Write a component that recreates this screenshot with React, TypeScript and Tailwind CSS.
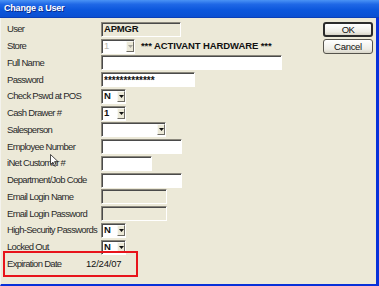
import React from "react";

const font = { fontFamily: '"Liberation Sans", Arial, sans-serif' };

function TextBox({ w, value, disabled, bold, stars }: { w: number; value?: string; disabled?: boolean; bold?: boolean; stars?: boolean }) {
  return (
    <div
      className={`h-[15px] flex items-center pl-[2px] border border-[#8a877c] border-b-white border-r-white shadow-[inset_1px_1px_0_#4a4a4a] overflow-hidden whitespace-nowrap ${disabled ? "bg-[#ECE9D8]" : "bg-white"}`}
      style={{ width: w }}
    >
      {value && (
        <span className={`${bold ? "font-bold tracking-[-0.2px]" : ""} ${stars ? "text-[10px] font-bold leading-none pt-[3px] tracking-normal" : ""} text-[#111]`}>{value}</span>
      )}
    </div>
  );
}

function Combo({ w, value, disabled }: { w: number; value?: string; disabled?: boolean }) {
  return (
    <div
      className="h-[15px] flex items-stretch border border-[#8a877c] border-b-white border-r-white shadow-[inset_1px_1px_0_#4a4a4a] bg-white"
      style={{ width: w }}
    >
      <div className={`flex-1 flex items-center pl-[2px] ${disabled ? "text-[#b8b6ad] font-normal" : "text-[#111] font-bold tracking-normal"}`}>{value}</div>
      <div className="w-[8px] my-[1px] bg-[#ECE9D8] border border-[#f8f8f4] border-b-[#6f6d66] border-r-[#6f6d66] flex items-center justify-center">
        <svg width="5" height="3" viewBox="0 0 5 3">
          <path d="M0 0H5L2.5 3Z" fill={disabled ? "#a8a69e" : "#111"} />
        </svg>
      </div>
    </div>
  );
}

function Row({ label, children }: { label: string; children?: React.ReactNode }) {
  return (
    <div className="h-[16.75px] flex items-center">
      <div className="w-[94px] shrink-0 text-[#2a2a2a] whitespace-nowrap">{label}</div>
      {children}
    </div>
  );
}

export default function App() {
  return (
    <div className="w-[379px] h-[286px] overflow-hidden flex flex-col bg-[#ECE9D8] text-[9.5px] tracking-[-0.7px]" style={font}>
      <div className="h-[18px] shrink-0 flex items-center pl-[4px] bg-[linear-gradient(to_bottom,#4a93f5_0%,#1f68e6_25%,#0b56dc_60%,#0a4fd2_100%)] border-b border-[#0a3fb8]">
        <span className="text-white font-bold text-[9px] tracking-[-0.2px] [text-shadow:1px_1px_0_#0a2a8a]">Change a User</span>
      </div>
      <div className="relative flex-1 flex border-l border-l-[#f4f3ee] border-r-[3px] border-r-[#0831d9] border-b-2 border-b-[#0831d9]">
        <div className="flex-1 pl-[6px] pt-[3px] flex flex-col">
          <Row label="User"><TextBox w={80} value="APMGR" disabled bold /></Row>
          <Row label="Store">
            <Combo w={34} value="1" disabled />
            <span className="ml-[6px] font-bold text-[#111] tracking-[-0.1px]">*** ACTIVANT HARDWARE ***</span>
          </Row>
          <Row label="Full Name"><TextBox w={181} /></Row>
          <Row label="Password"><TextBox w={94} value="*************" stars /></Row>
          <Row label="Check Pswd at POS"><Combo w={25} value="N" /></Row>
          <Row label="Cash Drawer #"><Combo w={25} value="1" /></Row>
          <Row label="Salesperson"><Combo w={65} /></Row>
          <Row label="Employee Number"><TextBox w={81} /></Row>
          <Row label="iNet Customer #"><TextBox w={51} /></Row>
          <Row label="Department/Job Code"><TextBox w={81} /></Row>
          <Row label="Email Login Name"><TextBox w={66} disabled /></Row>
          <Row label="Email Login Password"><TextBox w={66} disabled /></Row>
          <Row label="High-Security Passwords"><Combo w={25} value="N" /></Row>
          <Row label="Locked Out"><Combo w={25} value="N" /></Row>
          <div className="h-[16.75px] flex items-center">
            <div className="w-[79px] shrink-0 text-[#2a2a2a]">Expiration Date</div>
            <span className="text-[#111] tracking-[-0.2px]">12/24/07</span>
          </div>
        </div>
        <div className="w-[50px] mr-[3px] pt-[4px] flex flex-col gap-[2px]">
          <button className="h-[15px] w-[50px] rounded-[3px] border-2 border-[#2b2b2b] bg-[linear-gradient(to_bottom,#ffffff,#eeede6_70%,#d8d5c8)] text-[#111] text-[9.5px] leading-none flex items-center justify-center" style={font}>OK</button>
          <button className="h-[15px] w-[50px] rounded-[3px] border border-[#55534c] bg-[linear-gradient(to_bottom,#ffffff,#eeede6_70%,#d8d5c8)] text-[#111] text-[9.5px] tracking-[-0.3px] leading-none flex items-center justify-center" style={font}>Cancel</button>
        </div>
        <div className="absolute left-[2px] top-[233px] w-[135px] h-[26px] border-2 border-[#e8141b] pointer-events-none" />
        <svg className="absolute left-[49px] top-[136px]" width="9" height="13" viewBox="0 0 9 13">
          <path d="M0.5 0.5V10.5L3 8.2L4.8 12.3L6.3 11.6L4.6 7.6H8Z" fill="#fff" stroke="#222" strokeWidth="0.8" strokeLinejoin="round" />
        </svg>
      </div>
    </div>
  );
}
